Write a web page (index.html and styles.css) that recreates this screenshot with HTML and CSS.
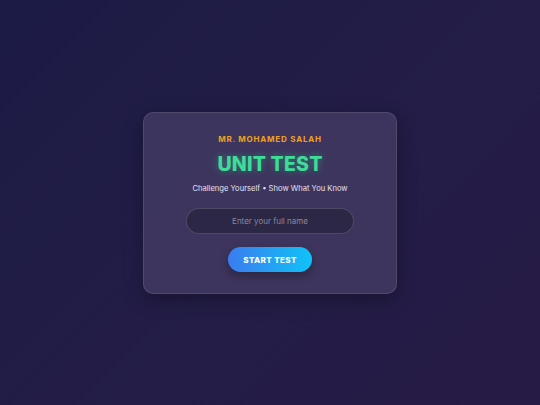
FILE: index.html
```html
<!DOCTYPE html>
<html>
<head>
<meta charset="utf-8">
<link rel="stylesheet" href="styles.css">
</head>
<body>
<main class="page">
  <section class="card">
    <div class="teacher">MR. MOHAMED SALAH</div>
    <h1 class="title">UNIT TEST</h1>
    <p class="subtitle">Challenge Yourself • Show What You Know</p>
    <input class="name" type="text" placeholder="Enter your full name">
    <button class="start">START TEST</button>
  </section>
</main>
</body>
</html>
```
FILE: styles.css
```css
* { box-sizing: border-box; }
html, body { margin: 0; padding: 0; }
body {
  width: 540px;
  height: 405px;
  overflow: hidden;
  font-family: "Inter", "Noto Sans", sans-serif;
  background: linear-gradient(135deg, #1c1b45 0%, #231d47 55%, #261b45 100%);
}
.page {
  height: 405px;
  display: flex;
  align-items: center;
  justify-content: center;
}
.card {
  width: 254px;
  height: 182px;
  margin-top: 1px;
  background: rgba(66, 58, 98, 0.85);
  border: 1px solid rgba(255, 255, 255, 0.1);
  border-radius: 10px;
  box-shadow: 0 6px 20px rgba(0, 0, 0, 0.3);
  display: flex;
  flex-direction: column;
  align-items: center;
  padding-top: 21px;
}
.teacher {
  color: #f0a21e;
  font-size: 8px;
  font-weight: 700;
  letter-spacing: 0.8px;
  line-height: 10px;
}
.title {
  margin: 8px 0 0;
  font-size: 19.5px;
  line-height: 24px;
  font-weight: 800;
  color: #3fdc98;
  letter-spacing: 0.2px;
  text-shadow: 0 0 7px rgba(52, 211, 153, 0.45);
}
.subtitle {
  margin: 8px 0 0;
  font-size: 7.6px;
  line-height: 10px;
  color: #e4e1f2;
}
.name {
  margin-top: 14px;
  width: 168px;
  height: 26px;
  border-radius: 13px;
  border: 1px solid rgba(255, 255, 255, 0.16);
  background: #2c2744;
  color: #ffffff;
  text-align: center;
  font-family: inherit;
  font-size: 8px;
  outline: none;
}
.name::placeholder { color: #8a86a3; }
.start {
  margin-top: 13px;
  width: 84px;
  height: 25px;
  border: none;
  border-radius: 13px;
  background: linear-gradient(90deg, #3b7cf0 0%, #0fc3f7 100%);
  color: #ffffff;
  font-family: inherit;
  font-size: 8px;
  font-weight: 800;
  letter-spacing: 0.4px;
  box-shadow: 0 4px 10px rgba(0, 0, 0, 0.3);
}
```
